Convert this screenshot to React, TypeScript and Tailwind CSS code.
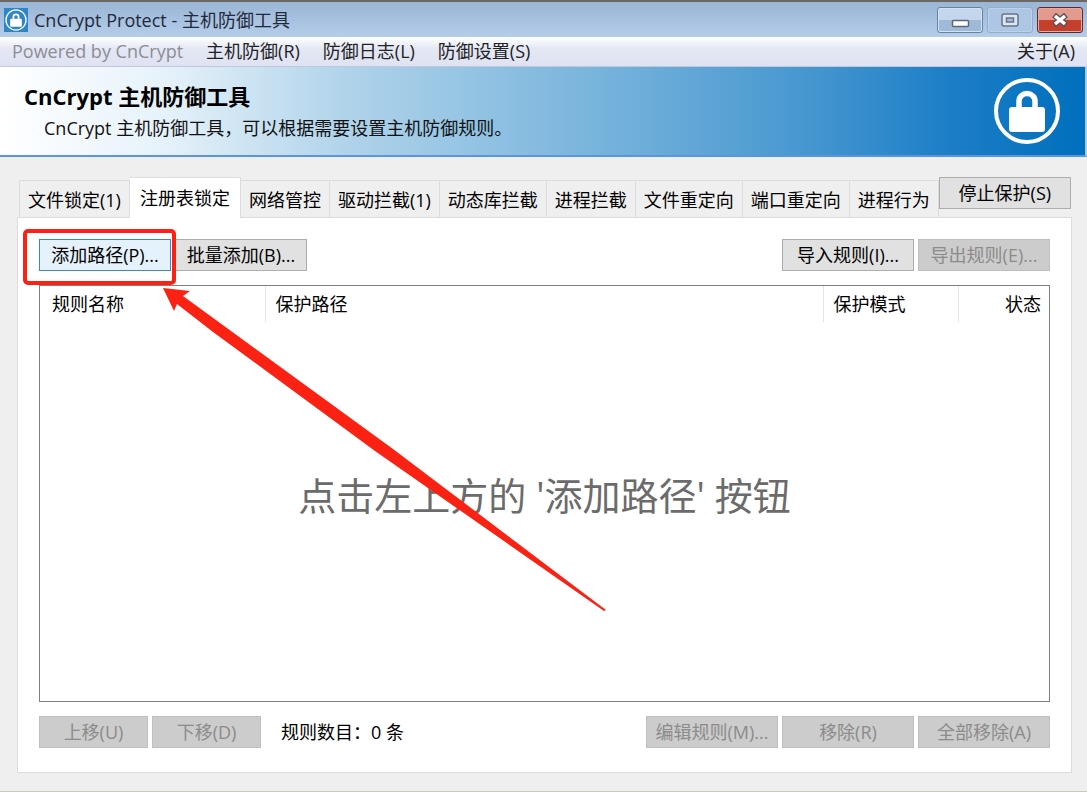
import { useState } from "react";
import { clsx } from "clsx";

const tabs = [
  "文件锁定(1)",
  "注册表锁定",
  "网络管控",
  "驱动拦截(1)",
  "动态库拦截",
  "进程拦截",
  "文件重定向",
  "端口重定向",
  "进程行为",
];

function LockLogo({ className }: { className?: string }) {
  return (
    <svg viewBox="0 0 68 68" className={className} aria-hidden="true">
      <circle cx="34" cy="34" r="31" fill="none" stroke="#fff" strokeWidth="4" />
      <path d="M26 31V24a8 7.500 0 0 1 16 0v7" fill="none" stroke="#fff" strokeWidth="5.500" />
      <rect x="16" y="30" width="36" height="25" rx="3" fill="#fff" />
    </svg>
  );
}

function PushButton({ label, width = "w-[132px]", disabled, focused }: { label: string; width?: string; disabled?: boolean; focused?: boolean }) {
  return (
    <button
      disabled={disabled}
      className={clsx(
        "h-8 shrink-0 whitespace-nowrap border text-center leading-7",
        width,
        disabled && "border-[#bfbfbf] bg-[#cccccc] text-[#8b8b8b]",
        focused && "border-[#3f87c4] bg-[#e5f1fb]",
        !disabled && !focused && "border-[#adadad] bg-[#e1e1e1]"
      )}
    >
      {label}
    </button>
  );
}

function TitleBar() {
  return (
    <div className="flex h-[37px] items-center border-t-2 border-[#6b6764] bg-gradient-to-b from-[#9ab5d5] to-[#b4cde9] pl-1 pr-1">
      <span className="h-6 w-6 bg-[#2f86c4] p-px">
        <LockLogo className="h-full w-full" />
      </span>
      <h1 className="ml-1.5 flex-1 text-[18px] leading-7 text-[#1f2a3a]">CnCrypt Protect - 主机防御工具</h1>
      <div className="flex gap-1">
        <button aria-label="最小化" className="h-[26px] w-[46px] rounded-[3px] border border-[#6882a3] bg-gradient-to-b from-[#c3d6ec] from-50% to-[#9fb9d8] to-50% shadow-[inset_0_0_0_1px_#d4e3f3]">
          <svg viewBox="0 0 44 24" className="h-full w-full">
            <rect x="14.500" y="12.500" width="16" height="6" rx="1" fill="#fff" stroke="#5d6776" strokeWidth="1.500" />
          </svg>
        </button>
        <button aria-label="最大化" disabled className="h-[26px] w-[46px] rounded-[3px] border border-[#91acce] bg-[#adc6e3] shadow-[inset_0_0_0_1px_#bdd2eb]">
          <svg viewBox="0 0 44 24" className="h-full w-full">
            <rect x="14" y="6" width="16" height="12" rx="2" fill="#dde5ef" stroke="#66758a" strokeWidth="1.500" />
            <rect x="18.500" y="10" width="7" height="4" fill="#a9bcd4" stroke="#66758a" strokeWidth="1.500" />
          </svg>
        </button>
        <button aria-label="关闭" className="h-[26px] w-[46px] rounded-[3px] border border-[#5e2a30] bg-gradient-to-b from-[#e39a8e] from-50% to-[#c5402c] to-50% shadow-[inset_0_0_0_1px_#eba99e]">
          <svg viewBox="0 0 44 24" className="h-full w-full">
            <path d="M16 7l12 10M28 7l-12 10" stroke="#5a5358" strokeWidth="6" />
            <path d="M17 8l10 8M27 8l-10 8" stroke="#fff" strokeWidth="3.500" />
          </svg>
        </button>
      </div>
    </div>
  );
}

function MenuBar() {
  return (
    <nav className="flex h-[30px] items-center gap-[23px] border-b border-[#c3c8d8] bg-gradient-to-b from-white via-[#e4e8f4] via-40% to-[#dfe2f2] px-3 text-[18px] text-[#222]">
      <span className="text-[#8d8d93]">Powered by CnCrypt</span>
      <button>主机防御(R)</button>
      <button>防御日志(L)</button>
      <button>防御设置(S)</button>
      <button className="ml-auto">关于(A)</button>
    </nav>
  );
}

function Banner() {
  return (
    <header className="flex h-[90px] items-center justify-between border-b-2 border-r-2 border-b-[#5b94e3] border-r-[#9fd0ee] bg-[linear-gradient(90deg,#ffffff_0%,#e6f2fa_15%,#b0d3ea_32%,#78b4dc_55%,#4496cf_75%,#1b7dc6_88%,#006fbd_100%)] pl-6 pr-6">
      <div className="pt-0.5">
        <h2 className="text-[22px] font-bold leading-8 text-black">CnCrypt 主机防御工具</h2>
        <p className="pl-5 text-[18px] leading-8 text-[#111]">CnCrypt 主机防御工具，可以根据需要设置主机防御规则。</p>
      </div>
      <LockLogo className="h-[68px] w-[68px]" />
    </header>
  );
}

function RuleTable() {
  return (
    <div className="mt-3.5 flex flex-1 flex-col border border-[#7f7f7f] bg-white">
      <table className="w-full table-fixed text-left">
        <thead>
          <tr className="h-9">
            <th className="w-[225px] border-r border-[#e3e3e3] pl-3 font-normal">规则名称</th>
            <th className="border-r border-[#e3e3e3] pl-2.5 font-normal">保护路径</th>
            <th className="w-[135px] border-r border-[#e3e3e3] pl-2.5 font-normal">保护模式</th>
            <th className="w-[91px] pr-2 text-right font-normal">状态</th>
          </tr>
        </thead>
      </table>
      <p className="flex flex-1 items-center justify-center pb-8 text-[38px] text-[#6b6b6b]">点击左上方的 '添加路径' 按钮</p>
    </div>
  );
}

export default function App() {
  const [active, setActive] = useState(1);
  return (
    <div className="flex min-h-screen flex-col border-b border-[#c4cdb0] bg-[#efefef] font-['Open_Sans','Noto_Sans_CJK_SC',sans-serif]">
      <TitleBar />
      <MenuBar />
      <Banner />
      <main className="flex flex-1 flex-col pb-[18px] pl-[17px] pr-[15px] pt-5 text-[18px] text-black">
        <div className="flex h-10 justify-between pl-0.5 pr-0.5">
          <div role="tablist" className="flex items-end">
            {tabs.map((name, i) => (
              <button
                key={name}
                role="tab"
                aria-selected={i === active}
                onClick={() => setActive(i)}
                className={clsx(
                  "whitespace-nowrap border-r border-t border-[#dcdcdc]",
                  i === 0 && "border-l",
                  i === active ? "z-10 -mb-px h-[41px] bg-white px-2.5" : "h-[37px] px-2 pt-0.5"
                )}
              >
                {name}
              </button>
            ))}
          </div>
          <PushButton label="停止保护(S)" />
        </div>
        <section role="tabpanel" className="relative flex flex-1 flex-col border border-[#dcdcdc] bg-white px-[21px] pb-6 pt-[21px]">
          <div className="flex gap-1">
            <div className="relative">
              <PushButton label="添加路径(P)..." focused />
              <div className="pointer-events-none absolute -left-4 -top-2.5 z-10 h-14 w-[153px] rounded-[5px] border-4 border-[#fb2213]" />
            </div>
            <PushButton label="批量添加(B)..." />
            <div className="ml-auto flex gap-1">
              <PushButton label="导入规则(I)..." />
              <PushButton label="导出规则(E)..." disabled />
            </div>
          </div>
          <RuleTable />
          <div className="mt-3.5 flex items-center gap-1">
            <PushButton label="上移(U)" width="w-[109px]" disabled />
            <PushButton label="下移(D)" width="w-[109px]" disabled />
            <span className="ml-4">规则数目：0 条</span>
            <div className="ml-auto flex gap-1">
              <PushButton label="编辑规则(M)..." disabled />
              <PushButton label="移除(R)" disabled />
              <PushButton label="全部移除(A)" disabled />
            </div>
          </div>
          <svg className="pointer-events-none absolute left-[145px] top-[70px] z-20" width="444" height="324" viewBox="0 0 444 324" aria-hidden="true">
            <path d="M0 0L27 3L20 8L230 161L443 322L441 323L212 163L50 44L14 16L11 23Z" fill="#fb2213" />
          </svg>
        </section>
      </main>
    </div>
  );
}
